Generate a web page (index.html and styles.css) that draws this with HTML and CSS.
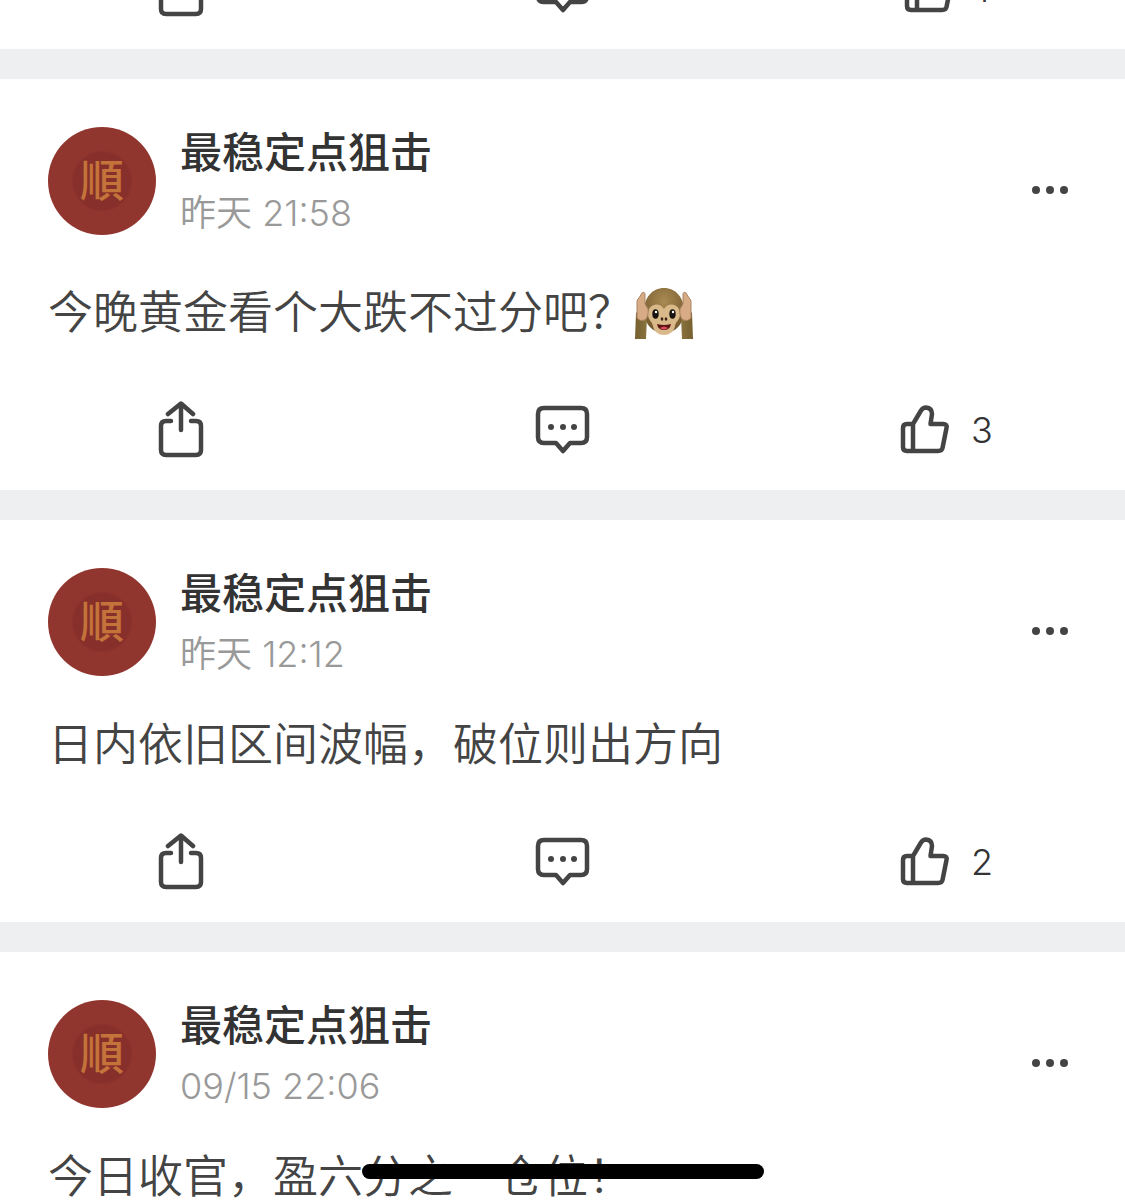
FILE: index.html
```
<!DOCTYPE html>
<html lang="zh-CN">
<head>
    <meta charset="UTF-8">
    <meta name="viewport" content="width=device-width, initial-scale=1.0">
    <title>最稳定点狙击</title>
    <link rel="stylesheet" href="styles.css">
</head>
<body>
    <!-- shared icons -->
    <svg class="sprite" aria-hidden="true">
        <symbol id="icon-share" viewBox="0 0 46 58">
            <path d="M23 29V3M10 13L23 2.500L35 13M13 20H8Q3 20 3 25V49Q3 54 8 54H38Q43 54 43 49V25Q43 20 38 20H33"/>
        </symbol>
        <symbol id="icon-comment" viewBox="0 0 56 50">
            <path d="M9 3H46Q52 3 52 9V32Q52 38 46 38H35L28 46L21 38H9Q3 38 3 32V9Q3 3 9 3Z"/>
            <g class="dots"><circle cx="16" cy="22" r="3"/><circle cx="28" cy="22" r="3"/><circle cx="39" cy="22" r="3"/></g>
        </symbol>
        <symbol id="icon-like" viewBox="0 0 50 50">
            <path d="M13 19L21 5.500Q23 2.500 26 2.500Q32 3 32 9L30.500 19H43Q47.500 19 46.500 23L42.500 43Q42 46 38 46H7Q3 46 3 42V23Q3 19 7 19H13V46"/>
        </symbol>
        <symbol id="icon-more" viewBox="0 0 54 90">
            <g class="dots"><circle cx="13" cy="45" r="4"/><circle cx="27" cy="45" r="4"/><circle cx="41" cy="45" r="4"/></g>
        </symbol>
    </svg>

    <main class="feed">
        <article class="card card-cut">
            <div class="actions">
                <button class="action" aria-label="分享"><svg class="icon icon-share"><use href="#icon-share"/></svg></button>
                <button class="action" aria-label="评论"><svg class="icon icon-comment"><use href="#icon-comment"/></svg></button>
                <button class="action action-like" aria-label="赞"><svg class="icon icon-like"><use href="#icon-like"/></svg><span>1</span></button>
            </div>
        </article>

        <article class="card">
            <header class="card-header">
                <div class="avatar"><span>順</span></div>
                <div class="info">
                    <h2 class="name">最稳定点狙击</h2>
                    <time class="time">昨天 21:58</time>
                </div>
                <button class="more" aria-label="更多"><svg class="icon"><use href="#icon-more"/></svg></button>
            </header>
            <p class="content">今晚黄金看个大跌不过分吧？<svg class="emoji" viewBox="0 0 58 54" role="img" aria-label="捂耳猴">
                <defs>
                    <radialGradient id="fur" cx="50%" cy="30%" r="70%">
                        <stop offset="0" stop-color="#a98a52"/>
                        <stop offset="1" stop-color="#73582b"/>
                    </radialGradient>
                    <linearGradient id="arm" x1="0" x2="1" y1="0" y2="0">
                        <stop offset="0" stop-color="#75602f"/>
                        <stop offset="0.5" stop-color="#a58d52"/>
                        <stop offset="1" stop-color="#75602f"/>
                    </linearGradient>
                </defs>
                <path fill="url(#fur)" d="M29 2C41 2 49 12 49 25C49 37 41 47 29 47C17 47 9 37 9 25C9 12 17 2 29 2Z"/>
                <path fill="#d9b98a" d="M29 23C24 15 13 18 13 28C13 34 17 35 18 40C19 46 24 49 29 49C34 49 39 46 40 40C41 35 45 34 45 28C45 18 34 15 29 23Z"/>
                <path fill="url(#arm)" d="M0 53L1 27L5 22L12 31L11 53ZM58 53L57 27L53 22L46 31L47 53Z"/>
                <path fill="#d7ab85" stroke="#a98261" stroke-width="1" d="M2 32V16Q2 13 4 12L7 7Q10 5 10 9V18L13 23Q14 30 10 34Q5 36 2 32ZM56 32V16Q56 13 54 12L51 7Q48 5 48 9V18L45 23Q44 30 48 34Q53 36 56 32Z"/>
                <ellipse cx="20.500" cy="28" rx="3.200" ry="4.800" fill="#171310"/>
                <ellipse cx="37.500" cy="28" rx="3.200" ry="4.800" fill="#171310"/>
                <circle cx="21" cy="26" r="1.200" fill="#fff"/>
                <circle cx="38" cy="26" r="1.200" fill="#fff"/>
                <ellipse cx="27" cy="33" rx="1.300" ry="1.800" fill="#3b2413"/>
                <ellipse cx="31" cy="33" rx="1.300" ry="1.800" fill="#3b2413"/>
                <path fill="#581312" d="M22 38Q29 40 36 38Q35 44 29 44Q23 44 22 38Z"/>
                <path fill="#d84c5c" d="M25 42Q29 39 33 42Q29 45 25 42Z"/>
            </svg></p>
            <div class="actions">
                <button class="action" aria-label="分享"><svg class="icon icon-share"><use href="#icon-share"/></svg></button>
                <button class="action" aria-label="评论"><svg class="icon icon-comment"><use href="#icon-comment"/></svg></button>
                <button class="action action-like" aria-label="赞"><svg class="icon icon-like"><use href="#icon-like"/></svg><span>3</span></button>
            </div>
        </article>

        <article class="card">
            <header class="card-header">
                <div class="avatar"><span>順</span></div>
                <div class="info">
                    <h2 class="name">最稳定点狙击</h2>
                    <time class="time">昨天 12:12</time>
                </div>
                <button class="more" aria-label="更多"><svg class="icon"><use href="#icon-more"/></svg></button>
            </header>
            <p class="content">日内依旧区间波幅，破位则出方向</p>
            <div class="actions">
                <button class="action" aria-label="分享"><svg class="icon icon-share"><use href="#icon-share"/></svg></button>
                <button class="action" aria-label="评论"><svg class="icon icon-comment"><use href="#icon-comment"/></svg></button>
                <button class="action action-like" aria-label="赞"><svg class="icon icon-like"><use href="#icon-like"/></svg><span>2</span></button>
            </div>
        </article>

        <article class="card">
            <header class="card-header">
                <div class="avatar"><span>順</span></div>
                <div class="info">
                    <h2 class="name">最稳定点狙击</h2>
                    <time class="time">09/15 22:06</time>
                </div>
                <button class="more" aria-label="更多"><svg class="icon"><use href="#icon-more"/></svg></button>
            </header>
            <p class="content">今日收官，盈六分之一仓位！</p>
        </article>
    </main>

    <div class="home-bar"></div>
</body>
</html>
```
FILE: styles.css
```
* {
    box-sizing: border-box;
}
body {
    margin: 0;
    height: 100vh;
    overflow: hidden;
    background: #fff;
    color: #444;
    font-family: "Noto Sans CJK SC", sans-serif;
}
button {
    padding: 0;
    border: none;
    background: none;
    color: inherit;
    font: inherit;
    cursor: pointer;
}
h2, p {
    margin: 0;
}
.sprite {
    display: none;
}
.feed {
    display: flex;
    flex-direction: column;
    gap: 30px;
    background: #eeeff1;
}
.card {
    background: #fff;
}
/* first card is scrolled almost out of view */
.card-cut {
    display: flex;
    flex-direction: column;
    justify-content: flex-end;
    height: 49px;
    overflow: hidden;
}
.card-header {
    display: flex;
    align-items: flex-end;
    padding: 48px 48px 0;
}
.avatar {
    display: flex;
    align-items: center;
    justify-content: center;
    width: 108px;
    height: 108px;
    padding-bottom: 6px;
    border-radius: 50%;
    background: radial-gradient(circle, #872f2a 28px, #91352f 31px);
    color: #c4743a;
    font-family: "Noto Sans CJK TC", sans-serif;
    font-size: 44px;
    font-weight: 500;
    line-height: 1;
}
.info {
    flex: 1;
    height: 108px;
    padding-left: 24px;
}
.name {
    color: #333;
    font-size: 42px;
    font-weight: 500;
    line-height: 46px;
}
.time {
    display: block;
    margin-top: 14px;
    color: #999;
    font-family: Inter, "Noto Sans CJK SC", sans-serif;
    font-size: 36px;
    font-weight: 350;
    line-height: 52px;
}
.more {
    width: 54px;
    height: 90px;
}
.more .icon {
    width: 54px;
    height: 90px;
}
.content {
    margin-top: 34px;
    padding: 0 48px;
    font-size: 45px;
    font-weight: 350;
    line-height: 63px;
}
.emoji {
    width: 58px;
    height: 54px;
    margin-top: 17px;
    margin-left: 2px;
    vertical-align: -11px;
}
.actions {
    display: grid;
    flex-shrink: 0;
    grid-template-columns: repeat(3, 1fr);
    column-gap: 21px;
    height: 120px;
    margin-top: 29px;
}
.action {
    display: flex;
    align-items: center;
    justify-content: center;
    gap: 21px;
    color: #333;
    font-family: Inter, sans-serif;
    font-size: 36px;
    font-weight: 300;
}
.action-like {
    padding-left: 4px;
}
.icon {
    display: block;
    fill: none;
    stroke: #444;
    stroke-width: 4.5;
    stroke-linecap: round;
    stroke-linejoin: round;
}
.dots {
    fill: #444;
    stroke: none;
}
.icon-share {
    width: 46px;
    height: 58px;
}
.icon-comment {
    width: 56px;
    height: 50px;
}
.icon-like {
    width: 50px;
    height: 50px;
}
.home-bar {
    position: fixed;
    bottom: 24px;
    left: 50%;
    width: 402px;
    height: 15px;
    border-radius: 8px;
    background: #000;
    transform: translateX(-50%);
}
```
